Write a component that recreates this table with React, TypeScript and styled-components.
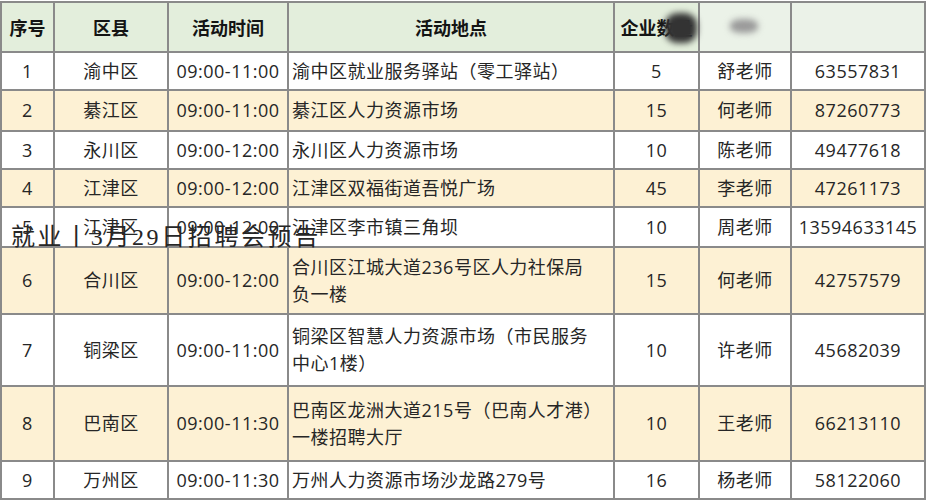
import React from "react";
import styled, { createGlobalStyle } from "styled-components";

const GlobalStyle = createGlobalStyle`
  html, body {
    margin: 0;
    padding: 0;
    background: #ffffff;
  }
  body {
    font-family: "Noto Sans CJK SC", "Noto Sans", sans-serif;
  }
`;

const columns = [
  { name: "序号", width: 53 },
  { name: "区县", width: 114 },
  { name: "活动时间", width: 120 },
  { name: "活动地点", width: 326 },
  { name: "企业数量", width: 85 },
  { name: "", width: 92 },
  { name: "", width: 134 },
];

const events = [
  { no: 1, district: "渝中区", time: "09:00-11:00", place: ["渝中区就业服务驿站（零工驿站）"], count: 5, contact: "舒老师", phone: "63557831", height: 38 },
  { no: 2, district: "綦江区", time: "09:00-11:00", place: ["綦江区人力资源市场"], count: 15, contact: "何老师", phone: "87260773", height: 41 },
  { no: 3, district: "永川区", time: "09:00-12:00", place: ["永川区人力资源市场"], count: 10, contact: "陈老师", phone: "49477618", height: 38 },
  { no: 4, district: "江津区", time: "09:00-12:00", place: ["江津区双福街道吾悦广场"], count: 45, contact: "李老师", phone: "47261173", height: 38 },
  { no: 5, district: "江津区", time: "09:00-12:00", place: ["江津区李市镇三角坝"], count: 10, contact: "周老师", phone: "13594633145", height: 40 },
  { no: 6, district: "合川区", time: "09:00-12:00", place: ["合川区江城大道236号区人力社保局", "负一楼"], count: 15, contact: "何老师", phone: "42757579", height: 67 },
  { no: 7, district: "铜梁区", time: "09:00-11:00", place: ["铜梁区智慧人力资源市场（市民服务", "中心1楼）"], count: 10, contact: "许老师", phone: "45682039", height: 72 },
  { no: 8, district: "巴南区", time: "09:00-11:30", place: ["巴南区龙洲大道215号（巴南人才港）", "一楼招聘大厅"], count: 10, contact: "王老师", phone: "66213110", height: 75 },
  { no: 9, district: "万州区", time: "09:00-11:30", place: ["万州人力资源市场沙龙路279号"], count: 16, contact: "杨老师", phone: "58122060", height: 38 },
];

const Page = styled.div`
  position: relative;
  width: 926px;
  height: 500px;
  overflow: hidden;
  background: #ffffff;
  padding-top: 1px;
  box-sizing: border-box;
`;

const Table = styled.table`
  width: 925px;
  table-layout: fixed;
  border-collapse: collapse;
  color: #262626;
  font-family: "Open Sans", "Noto Sans CJK SC", sans-serif;
  font-size: 18px;
  letter-spacing: 0.5px;
`;

const HeadRow = styled.tr`
  height: 50px;
  background: #e3eedc;
`;

const HeadCell = styled.th<{ $faded?: boolean }>`
  border: 2px solid #8a8a8a;
  padding: 0;
  font-family: "Noto Sans CJK SC", sans-serif;
  font-size: 18px;
  font-weight: 700;
  letter-spacing: 0;
  color: #141414;
  text-align: center;
  white-space: nowrap;
  overflow: hidden;
  background: ${(p) => (p.$faded ? "#ebf2e8" : "transparent")};
`;

const Row = styled.tr<{ $striped: boolean }>`
  background: ${(p) => (p.$striped ? "#fdf1d4" : "#ffffff")};
`;

const Cell = styled.td<{ $align?: "left" | "center" }>`
  border: 2px solid #8a8a8a;
  padding: ${(p) => (p.$align === "left" ? "0 2px 0 3px" : "0")};
  text-align: ${(p) => p.$align ?? "center"};
  vertical-align: middle;
  white-space: nowrap;
  line-height: 27px;
  overflow: hidden;
`;

const Line = styled.div`
  white-space: nowrap;
`;

const Smudge = styled.div<{ $x: number; $y: number; $w: number; $h: number; $color: string; $blur: number }>`
  position: absolute;
  left: ${(p) => p.$x}px;
  top: ${(p) => p.$y}px;
  width: ${(p) => p.$w}px;
  height: ${(p) => p.$h}px;
  background: ${(p) => p.$color};
  border-radius: 40%;
  filter: blur(${(p) => p.$blur}px);
`;

const Caption = styled.div`
  position: absolute;
  left: 11px;
  top: 222px;
  font-family: "Liberation Serif", "Noto Sans CJK SC", serif;
  font-size: 24px;
  font-weight: 400;
  letter-spacing: 2.6px;
  line-height: 30px;
  color: #262626;
  white-space: nowrap;
`;

export default function App() {
  return (
    <Page>
      <GlobalStyle />
      <Table>
        <colgroup>
          {columns.map((c, i) => (
            <col key={i} style={{ width: c.width }} />
          ))}
        </colgroup>
        <thead>
          <HeadRow>
            {columns.map((c, i) => (
              <HeadCell key={i} $faded={i >= 5}>
                {c.name}
              </HeadCell>
            ))}
          </HeadRow>
        </thead>
        <tbody>
          {events.map((e, i) => (
            <Row key={e.no} $striped={i % 2 === 1} style={{ height: e.height }}>
              <Cell>{e.no}</Cell>
              <Cell>{e.district}</Cell>
              <Cell>{e.time}</Cell>
              <Cell $align="left">
                {e.place.map((line) => (
                  <Line key={line}>{line}</Line>
                ))}
              </Cell>
              <Cell>{e.count}</Cell>
              <Cell>{e.contact}</Cell>
              <Cell>{e.phone}</Cell>
            </Row>
          ))}
        </tbody>
      </Table>
      <Smudge $x={665} $y={13} $w={32} $h={30} $color="#333333" $blur={3} />
      <Smudge $x={730} $y={19} $w={28} $h={14} $color="#9a9a9a" $blur={3} />
      <Caption>就业丨3月29日招聘会预告</Caption>
    </Page>
  );
}
